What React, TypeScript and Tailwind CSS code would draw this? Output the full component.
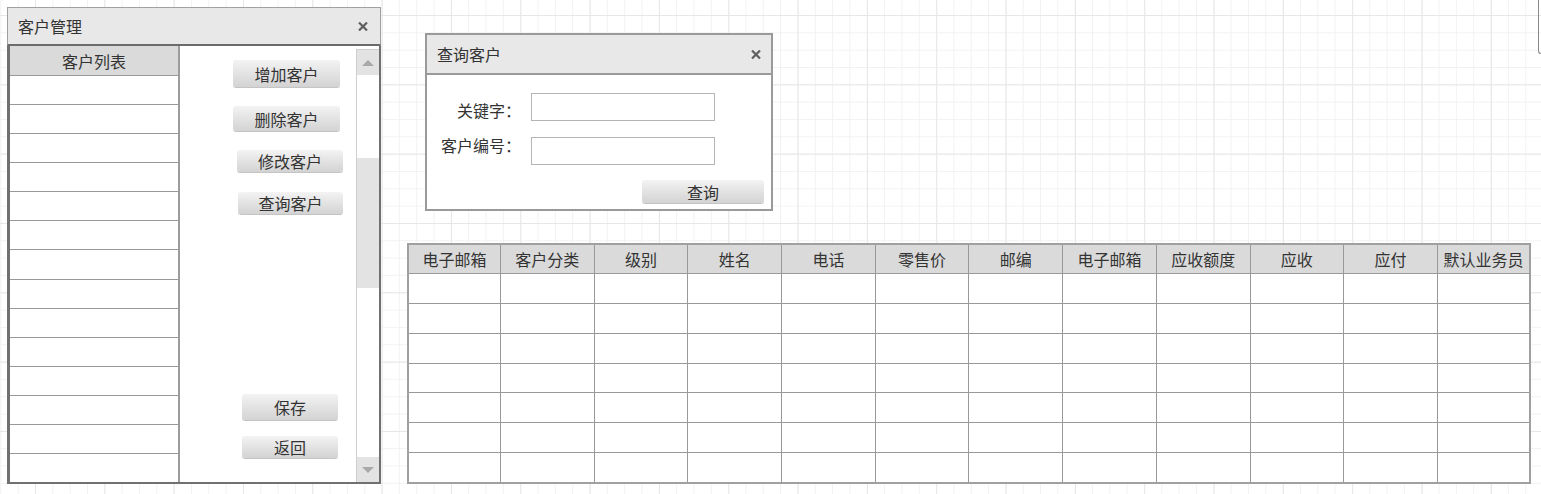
import React from 'react';

const headers = ['电子邮箱', '客户分类', '级别', '姓名', '电话', '零售价', '邮编', '电子邮箱', '应收额度', '应收', '应付', '默认业务员'];

const CloseMark = () => (
  <svg width="10" height="9" viewBox="0 0 10 9" className="shrink-0">
    <path d="M1 0.5 L9 8.5 M9 0.5 L1 8.5" stroke="#5f5f5f" strokeWidth="2.2" strokeLinecap="butt" />
  </svg>
);

// grey gradient button used all over the mockup
const GrayButton = ({ label, className }: { label: string; className: string }) => (
  <div
    className={`flex items-center justify-center rounded-[3px] bg-linear-to-b from-[#f3f3f3] to-[#d3d3d3] text-[16px] text-[#333] shadow-[0_1px_0_#c4c4c4] ${className}`}
  >
    {label}
  </div>
);

const ScrollBar = () => (
  <div className="mt-[3px] flex w-[23px] flex-col border-t border-l border-[#cfcfcf]">
    <div className="flex h-[25px] items-center justify-center bg-[#e3e3e3]">
      <div className="h-0 w-0 border-r-[6px] border-b-[6px] border-l-[6px] border-r-transparent border-b-[#a9a9a9] border-l-transparent" />
    </div>
    <div className="h-[83px] bg-white" />
    <div className="h-[130px] bg-[#e3e3e3]" />
    <div className="flex-1 bg-white" />
    <div className="flex h-[25px] items-center justify-center bg-[#e3e3e3]">
      <div className="h-0 w-0 border-t-[6px] border-r-[6px] border-l-[6px] border-t-[#a9a9a9] border-r-transparent border-l-transparent" />
    </div>
  </div>
);

const CustomerWindow = () => (
  <div className="flex h-[477px] w-[374px] flex-col">
    {/* title bar */}
    <div className="flex h-[39px] items-center justify-between border border-[#a0a0a0] border-b-2 border-b-[#6b6b6b] bg-[#e8e8e8] pr-[12px] pl-[10px]">
      <span className="text-[16px] text-[#333]">客户管理</span>
      <CloseMark />
    </div>

    <div className="flex flex-1 border-r-2 border-b-2 border-l-[3px] border-[#707070] bg-white">
      {/* customer list */}
      <div className="flex w-[170px] flex-col border-r-2 border-[#9c9c9c]">
        <div className="flex h-[30px] items-center justify-center border-b border-[#999] bg-[#dadada] text-[16px] text-[#333]">
          客户列表
        </div>
        {Array.from({ length: 14 }).map((_, i) => (
          <div key={i} className={`flex-1 ${i < 13 ? 'border-b border-[#999]' : ''}`} />
        ))}
      </div>

      {/* action buttons */}
      <div className="flex w-[176px] flex-col">
        <GrayButton label="增加客户" className="mt-[14px] ml-[53px] h-[27px] w-[107px]" />
        <GrayButton label="删除客户" className="mt-[19px] ml-[53px] h-[25px] w-[107px]" />
        <GrayButton label="修改客户" className="mt-[19px] ml-[57px] h-[22px] w-[106px]" />
        <GrayButton label="查询客户" className="mt-[20px] ml-[58px] h-[22px] w-[105px]" />
        <GrayButton label="保存" className="mt-[180px] ml-[62px] h-[26px] w-[96px]" />
        <GrayButton label="返回" className="mt-[16px] ml-[62px] h-[22px] w-[96px]" />
      </div>

      <ScrollBar />
    </div>
  </div>
);

const QueryWindow = () => (
  <div className="mt-[26px] ml-[18px] flex h-[178px] w-[348px] flex-col border-2 border-[#9a9a9a] bg-white">
    <div className="flex h-[40px] items-center justify-between border-b-2 border-[#9a9a9a] bg-[#e8e8e8] pr-[10px] pl-[10px]">
      <span className="text-[16px] text-[#333]">查询客户</span>
      <CloseMark />
    </div>
    <div className="flex flex-1 flex-col">
      <div className="mt-[18px] flex items-start">
        <span className="mt-[6px] w-[94px] text-right text-[16px] leading-[22px] text-[#333]">关键字：</span>
        <div className="ml-[10px] h-[28px] w-[184px] border-[1.5px] border-[#b5b5b5] bg-white" />
      </div>
      <div className="mt-[16px] flex items-start">
        <span className="mt-[-3px] w-[94px] text-right text-[16px] leading-[22px] text-[#333]">客户编号：</span>
        <div className="ml-[10px] h-[28px] w-[184px] border-[1.5px] border-[#b5b5b5] bg-white" />
      </div>
      <GrayButton label="查询" className="mt-[15px] mr-[7px] h-[23px] w-[122px] self-end" />
    </div>
  </div>
);

const cols = 'grid-cols-[92px_repeat(10,93.7px)_1fr]';

const CustomerTable = () => (
  <div className="mt-[32px] flex h-[241px] w-[1124px] flex-col border-2 border-[#a0a0a0] bg-white">
    <div className={`grid h-[29px] ${cols} border-b border-[#999] bg-[#dadada]`}>
      {headers.map((h, i) => (
        <div
          key={i}
          className={`flex items-center justify-center text-[16px] text-[#333] ${i < 11 ? 'border-r border-[#999]' : ''}`}
        >
          {h}
        </div>
      ))}
    </div>
    {Array.from({ length: 7 }).map((_, r) => (
      <div key={r} className={`grid flex-1 ${cols} ${r < 6 ? 'border-b border-[#999]' : ''}`}>
        {headers.map((_, c) => (
          <div key={c} className={c < 11 ? 'border-r border-[#999]' : ''} />
        ))}
      </div>
    ))}
  </div>
);

export default function App() {
  return (
    <div className="relative h-[494px] w-[1541px] overflow-hidden bg-white [background-image:linear-gradient(to_right,#e7e7e7_1px,transparent_1px),linear-gradient(to_bottom,#e7e7e7_1px,transparent_1px),linear-gradient(to_right,#f2f2f2_1px,transparent_1px),linear-gradient(to_bottom,#f2f2f2_1px,transparent_1px)] [background-position:35px_15px] [background-size:69.33px_69.33px,69.33px_69.33px,17.33px_17.33px,17.33px_17.33px] font-['Noto_Sans_CJK_SC','Liberation_Sans',sans-serif]">
      <div className="flex items-start pt-[7px] pl-[7px]">
        <CustomerWindow />
        <div className="ml-[26px] flex flex-col">
          <QueryWindow />
          <CustomerTable />
        </div>
      </div>
      {/* edge of a widget cut off at the right border */}
      <div className="absolute top-[-6px] right-0 h-[60px] w-[3px] rounded-bl-[3px] border-b border-l border-[#8a8a8a]" />
    </div>
  );
}
